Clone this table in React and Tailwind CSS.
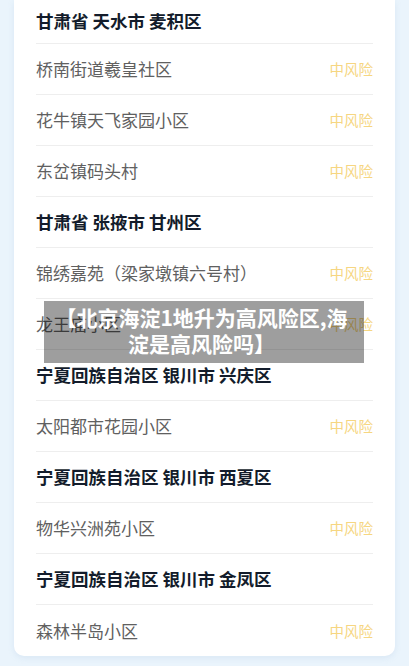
const groups = [
  { title: "甘肃省 天水市 麦积区", items: ["桥南街道羲皇社区", "花牛镇天飞家园小区", "东岔镇码头村"] },
  { title: "甘肃省 张掖市 甘州区", items: ["锦绣嘉苑（梁家墩镇六号村）", "龙王庙小区"] },
  { title: "宁夏回族自治区 银川市 兴庆区", items: ["太阳都市花园小区"] },
  { title: "宁夏回族自治区 银川市 西夏区", items: ["物华兴洲苑小区"] },
  { title: "宁夏回族自治区 银川市 金凤区", items: ["森林半岛小区"] },
];

export default function App() {
  const rows = [];
  groups.forEach((g, gi) => {
    rows.push({ type: "title", text: g.title, first: gi === 0 });
    g.items.forEach((t) => rows.push({ type: "item", text: t }));
  });

  return (
    <div
      className="relative w-[409px] h-[666px] overflow-hidden bg-[#eaf4fc]"
      style={{ fontFamily: '"Noto Sans CJK SC", "Noto Sans", sans-serif' }}
    >
      <div className="mx-[14px] w-[381px] bg-white rounded-b-[10px] shadow-[0_2px_6px_rgba(120,160,200,0.15)] px-[22px]">
        {rows.map((r, i) => (
          <div
            key={i}
            className={
              "flex items-center justify-between " +
              (r.first ? "h-[44px] " : "h-[51px] ") +
              (i < rows.length - 1 ? "border-b border-[#eeeeee]" : "")
            }
          >
            {r.type === "title" ? (
              <span className="text-[17.5px] font-bold text-[#131c2b]">{r.text}</span>
            ) : (
              <>
                <span className="text-[17px] text-[#606060]">{r.text}</span>
                <span className="text-[14.5px] text-[#f6d681]">中风险</span>
              </>
            )}
          </div>
        ))}
      </div>

      <div className="absolute left-[44px] top-[301px] w-[320px] h-[62px] bg-[rgba(0,0,0,0.38)] flex items-center justify-center">
        <p className="-mt-[5px] pr-[5px] text-[21px] font-bold leading-[26px] text-white text-center">
          【北京海淀1地升为高风险区,海
          <br />
          淀是高风险吗】
        </p>
      </div>
    </div>
  );
}
